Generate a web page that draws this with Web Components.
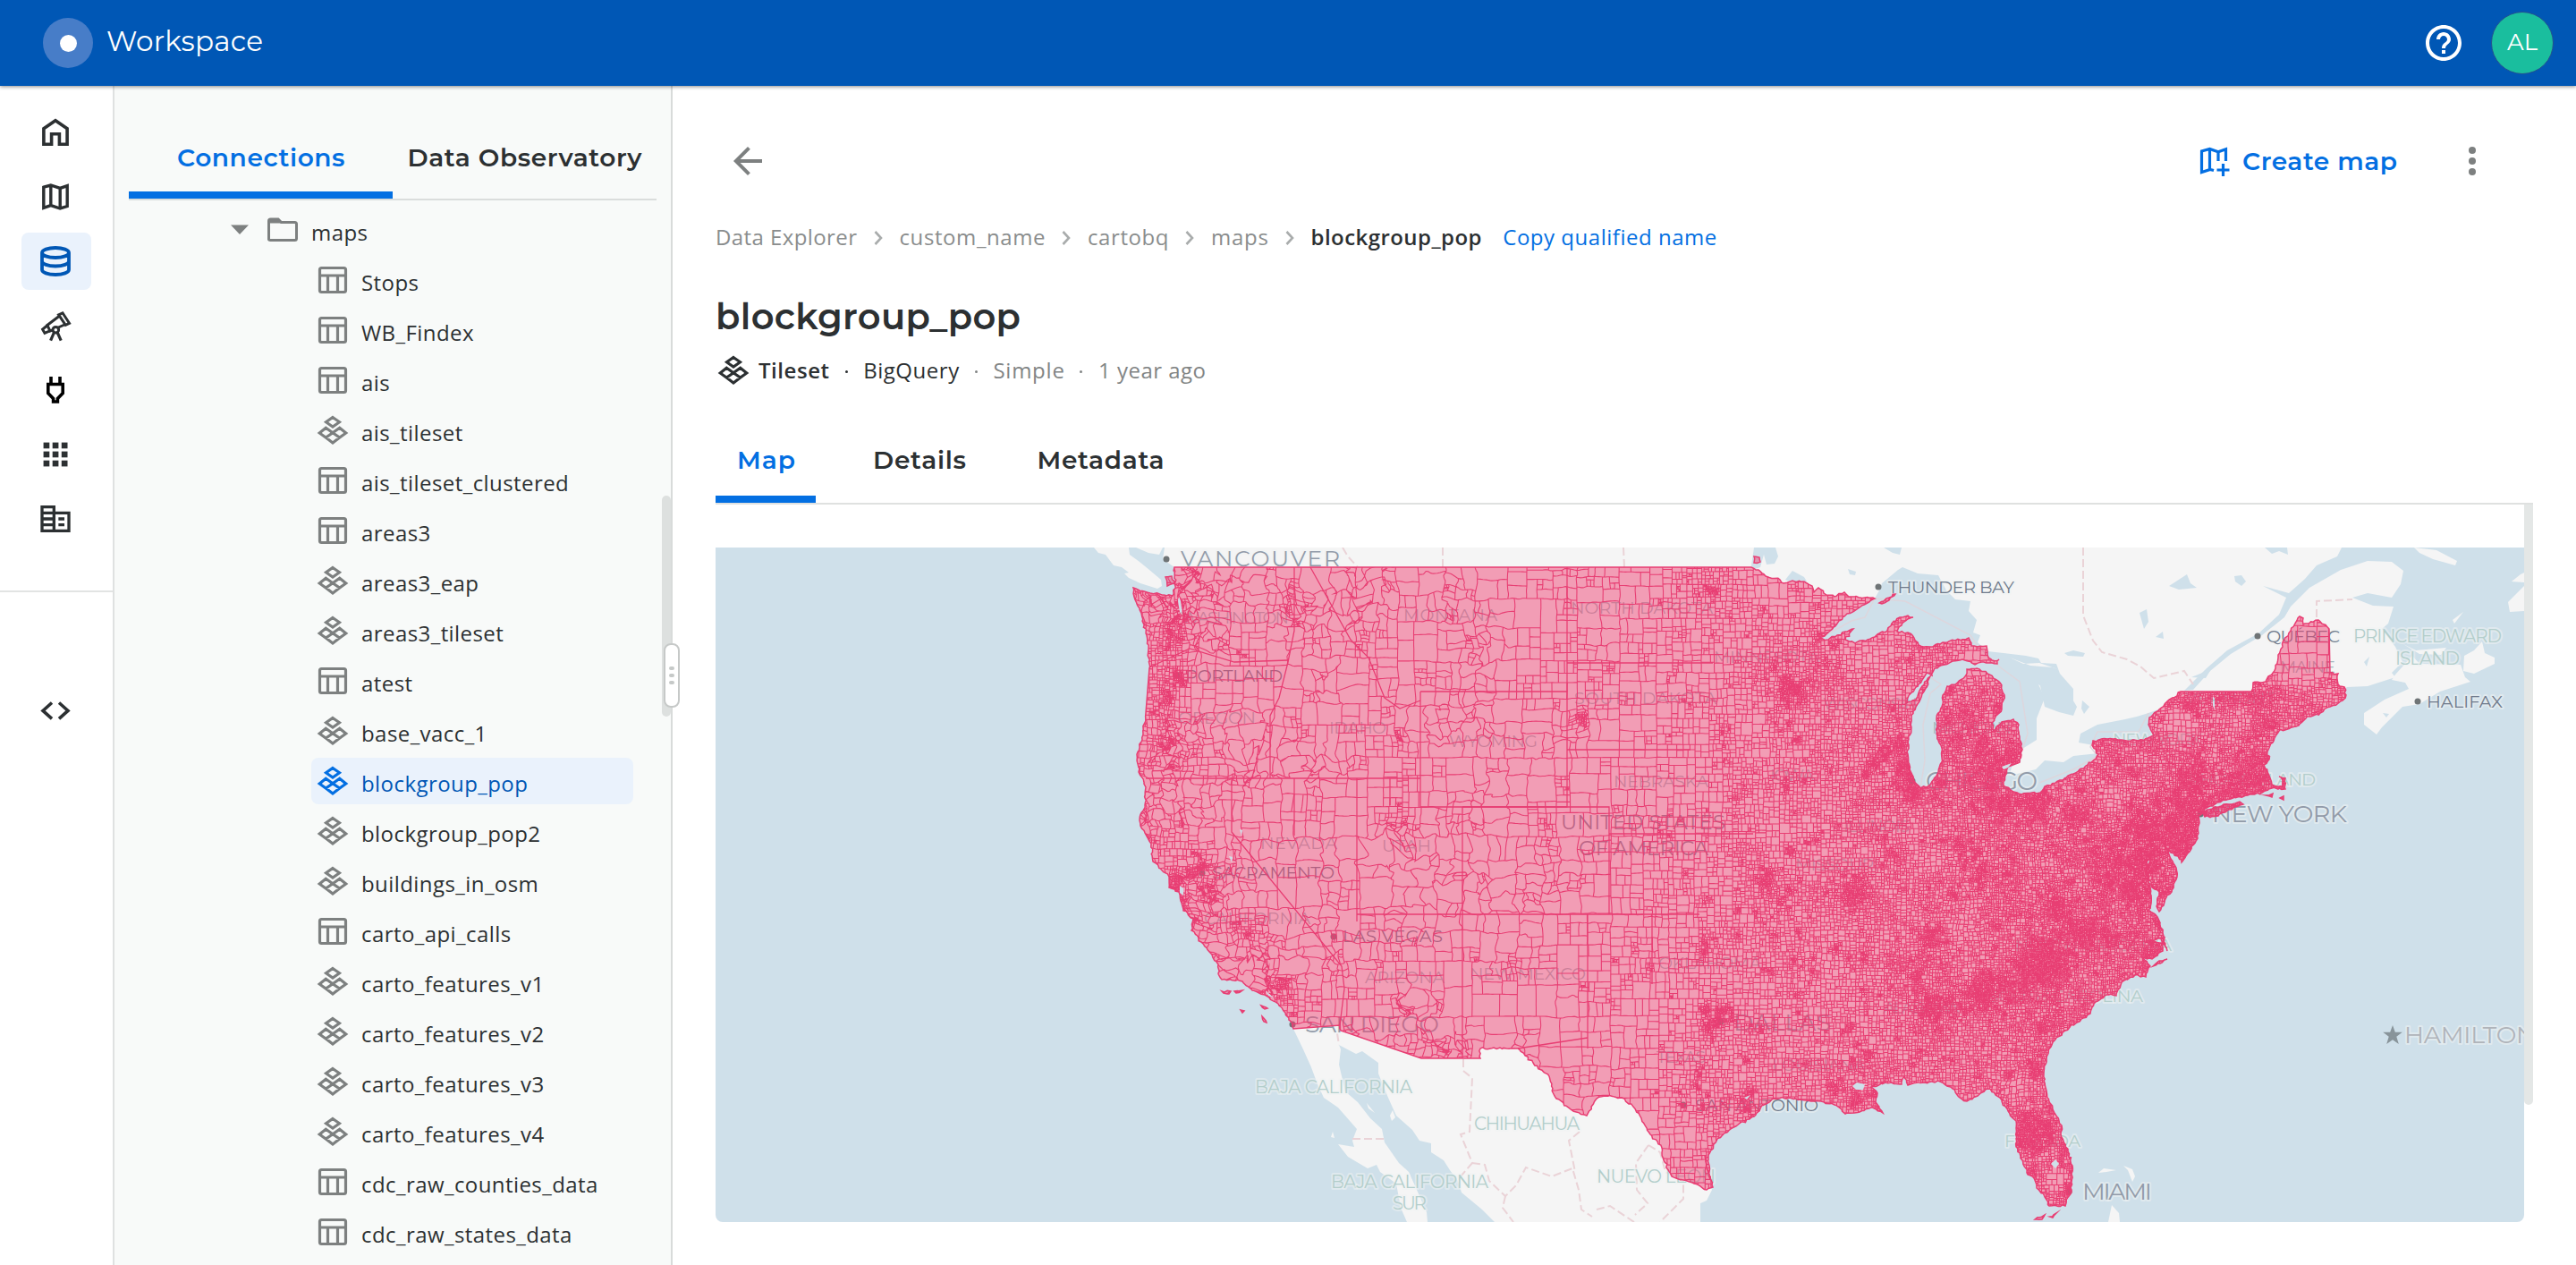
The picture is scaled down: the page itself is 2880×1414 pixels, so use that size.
<!DOCTYPE html>
<html lang="en">
<head>
<meta charset="utf-8">
<title>Workspace</title>
<style>
  html,body{margin:0;padding:0;background:#fff}
  body{width:2880px;height:1414px;overflow:hidden;font-family:"Open Sans","Liberation Sans",sans-serif;font-size:24px;color:#2c3032}
</style>
</head>
<body>
<workspace-app></workspace-app>
<script>
const define = (name, html, setup) => {
  const tpl = document.createElement('template');
  tpl.innerHTML = html;
  customElements.define(name, class extends HTMLElement {
    connectedCallback() {
      if (this.shadowRoot) return;
      this.attachShadow({mode: 'open'}).appendChild(tpl.content.cloneNode(true));
      if (setup) setup(this, this.shadowRoot);
    }
  });
};

/* ---------- icons: every drawing lives on a 48 x 48 grid ---------- */
const S = (d, w = 3.6) => `<path d="${d}" fill="none" stroke="currentColor" stroke-width="${w}"/>`;
const ICONS = {
  home: S('M10.9 37.2V19.8L24 10.8 37.1 19.8V37.2H28.4V25.8H19.6V37.2Z'),
  map: S('M10.8 13.2 18.8 11 29.2 14.4 37.2 11.6V34.6L29.2 37 18.8 33.6 10.8 36.4ZM18.8 11V33.6M29.2 14.4V37', 3.4),
  data: S('M9 14.5C9 11.5 15.5 9 24 9S39 11.5 39 14.5 32.5 20 24 20 9 17.5 9 14.5ZM9 14.5V33.5C9 36.5 15.5 39 24 39S39 36.500 39 33.5V14.5M9 24C9 27 15.5 29.5 24 29.5S39 27 39 24', 3.8),
  telescope: S('M27.600 11.800 32 9.800 39.500 21.300 35.300 23.300ZM28 13.500 14.800 23.500 18 30 34 23M14 24.500 9.600 28.200 12 32.300 17 30.200', 3) + '<circle cx="24.300" cy="28.700" r="3.300" fill="#fff" stroke="currentColor" stroke-width="3"/>' + S('M22.500 31.500 18.600 40.700M26.100 31.500 30.200 40.700', 3.2),
  plug: S('M19 9V17M29 9V17M15.800 17.500H32.200V27.500L26.400 33.500V37H21.600V33.500L15.800 27.500Z', 3.6),
  grid: [10.6, 20.6, 30.7].map(y => [10.6, 20.7, 30.8].map(x => `<rect x="${x}" y="${y}" width="6.700" height="6.700" fill="currentColor"/>`).join('')).join(''),
  building: '<g transform="translate(4 4) scale(1.667)"><path fill="currentColor" d="M12 7V3H2v18h20V7H12zM10 19H4v-2h6v2zm0-4H4v-2h6v2zm0-4H4V9h6v2zm0-4H4V5h6v2zm10 12h-8V9h8v10zm-2-8h-4v2h4v-2zm0 4h-4v2h4v-2z"/></g>',
  code: S('M20 15.500 10 24.400 20 33.300M28 15.500 38 24.400 28 33.300', 3.6),
  folder: S('M8.500 35.500V14Q8.500 12 10.500 12H19L22.500 15.500H37.500Q39.500 15.500 39.500 17.500V33.500Q39.500 35.500 37.500 35.500H10.500Q8.500 35.500 8.500 33.500', 3) + '<path d="M8 12h12l3.500 4.500H8z" fill="currentColor"/>',
  table: S('M11.500 10.500H36.500Q38.500 10.500 38.500 12.500V35.500Q38.500 37.500 36.500 37.500H11.500Q9.500 37.500 9.500 35.500V12.500Q9.500 10.500 11.500 10.500ZM9.500 19H38.500M18.500 19V37.500M29.500 19V37.500', 3.2),
  tileset: S('M24 9.500 31.500 14.800 24 20.100 16.500 14.800ZM16.300 21.200 24 26.800 16.300 32 9.200 27ZM31.700 21.200 38.800 27 31.700 32 24 26.800ZM24 26.800 31.700 32 24 38 16.300 32Z', 3.1),
  back: '<g transform="scale(2)"><path fill="currentColor" d="M20 11H7.830l5.590-5.590L12 4l-8 8 8 8 1.410-1.410L7.830 13H20v-2z"/></g>',
  help: '<g transform="scale(2)"><path fill="currentColor" d="M11 18h2v-2h-2v2zm1-16C6.480 2 2 6.480 2 12s4.480 10 10 10 10-4.480 10-10S17.520 2 12 2zm0 18c-4.410 0-8-3.590-8-8s3.590-8 8-8 8 3.590 8 8-3.590 8-8 8zm0-14c-2.210 0-4 1.790-4 4h2c0-1.100.9-2 2-2s2 .9 2 2c0 2-3 1.750-3 5h2c0-2.250 3-2.500 3-5 0-2.210-1.790-4-4-4z"/></g>',
  more: [12, 24, 36].map(y => `<circle cx="24" cy="${y}" r="4" fill="currentColor"/>`).join(''),
  mapadd: S('M23 34.500 19 33.500 9.500 36.500V13L18.500 10.500 28 13.800 36.500 10.800V24M18.500 10.500V34M28 14V24M33.500 27V41M26.500 34H40.500', 3.2),
  caret: '<path d="M14 18.500H34L24 29z" fill="currentColor"/>'
};
define('ui-icon', `<style>:host{display:block;width:48px;height:48px;flex:none}svg{display:block;width:100%;height:100%}</style><svg viewBox="0 0 48 48"></svg>`,
  (el, root) => { root.querySelector('svg').innerHTML = ICONS[el.getAttribute('name')]; });

/* one line of text whose tracking is set so that it fills the width given in "w" */
define('fit-text', `<style>:host{display:block;flex:none;white-space:nowrap;line-height:1.200}span{display:inline-block}</style><span><slot></slot></span>`,
  (el, root) => {
    const w = +el.getAttribute('w'), span = root.querySelector('span');
    el.style.width = w + 'px';
    const n = el.textContent.length;
    span.style.letterSpacing = ((w - span.getBoundingClientRect().width) / (n - 1)).toFixed(3) + 'px';
  });

define('app-header', `<style>
  :host{display:flex;align-items:center;height:96px;flex:none;background:#0057b5;color:#fff;padding:0 25px 0 48px;box-sizing:border-box;box-shadow:0 1px 4px rgba(0,0,0,.45);z-index:2;font-family:Montserrat,Inter,sans-serif}
  .logo{width:56px;height:56px;border-radius:50%;background:#477dc8;display:grid;place-items:center}
  .logo i{width:19px;height:19px;border-radius:50%;background:#fff}
  fit-text{margin:-2px 0 0 15px;font-size:31px}
  .sp{flex:1}
  .av{width:68px;height:68px;border-radius:50%;background:#1abe9e;border:1px solid #24508f;margin-left:29px;display:grid;place-items:center}
  .av fit-text{margin:0;font-size:26px}
</style><div class="logo"><i></i></div><fit-text w="175">Workspace</fit-text><div class="sp"></div><ui-icon name="help"></ui-icon><div class="av"><fit-text w="34">AL</fit-text></div>`);

define('rail-item', `<style>
  :host{display:grid;place-items:center;width:78px;height:64px;border-radius:8px;color:#2c3032}
  :host([active]){background:#eaf2fc;color:#0057b5}
  ui-icon{margin-left:-2px}
</style><ui-icon></ui-icon>`, (el, root) => {
  const i = document.createElement('ui-icon'); i.setAttribute('name', el.getAttribute('icon'));
  root.querySelector('ui-icon').replaceWith(i);
});
define('nav-rail', `<style>
  :host{display:flex;flex-direction:column;width:126px;border-right:2px solid #dfe1e1;background:#fff;flex:none}
  nav{display:flex;flex-direction:column;gap:8px;padding:20px 0 48px 24px}
  .sep{height:2px;background:#e2e4e3}
  .foot{padding:100px 0 0 24px}
</style><nav><rail-item icon="home"></rail-item><rail-item icon="map"></rail-item><rail-item icon="data" active></rail-item><rail-item icon="telescope"></rail-item><rail-item icon="plug" style="color:#000"></rail-item><rail-item icon="grid"></rail-item><rail-item icon="building"></rail-item></nav><div class="sep"></div><div class="foot"><rail-item icon="code"></rail-item></div>`);

define('ui-tab', `<style>
  :host{display:flex;align-items:center;box-sizing:border-box;height:100%;padding-top:1px;flex:none;color:#2c3032;font-family:Montserrat,Inter,sans-serif;font-weight:600;font-size:28px}
  :host([active]){color:#036fe2;box-shadow:inset 0 -8px #036fe2}
</style><slot></slot>`);

define('tree-row', `<style>
  :host{display:flex;align-items:center;height:56px;padding-left:220px;box-sizing:border-box;flex:none}
  .b{display:flex;align-items:center;height:52px;width:360px;border-radius:8px;color:#7d8080}
  span{margin:5px 0 0 8px;color:#2c3032;letter-spacing:.430px;white-space:nowrap}
  :host([active]) .b{background:#eaf2fc;color:#036fe2}
  :host([active]) span{color:#0057b5}
  :host([folder]){padding-left:120px}
</style><div class="b"></div>`, (el, root) => {
  root.querySelector('.b').innerHTML = (el.hasAttribute('folder') ? '<ui-icon name="caret" style="margin-left:-4px"></ui-icon>' : '') +
    `<ui-icon name="${el.getAttribute('icon')}"></ui-icon><span><slot></slot></span>`;
});

const ROWS = ['table Stops','table WB_Findex','table ais','tileset ais_tileset','table ais_tileset_clustered','table areas3','tileset areas3_eap','tileset areas3_tileset','table atest','tileset base_vacc_1','tileset blockgroup_pop','tileset blockgroup_pop2','tileset buildings_in_osm','table carto_api_calls','tileset carto_features_v1','tileset carto_features_v2','tileset carto_features_v3','tileset carto_features_v4','table cdc_raw_counties_data','table cdc_raw_states_data'];
define('tree-panel', `<style>
  :host{display:flex;flex-direction:column;position:relative;width:622px;border-right:2px solid #d8dbda;background:#f8faf9;flex:none;padding-top:34px;box-sizing:content-box;height:1284px}
  .tabs{display:flex;height:92px;margin:0 16px;border-bottom:2px solid #dadddc}
  .tree{padding-top:5px;display:flex;flex-direction:column}
  .thumb{position:absolute;right:0;top:458px;width:10px;height:247px;background:#dde0df;border-radius:5px}
  .grip{position:absolute;right:-10px;top:623px;width:14px;height:68px;background:#fff;border:2px solid #c6c9c8;border-radius:8px;display:flex;flex-direction:column;align-items:center;justify-content:center;gap:4px}
  .grip i{width:6px;height:4px;border-radius:2px;background:#c6c9c8}
</style><div class="tabs"><ui-tab active style="width:295px"><fit-text w="187.500" style="margin-left:54px">Connections</fit-text></ui-tab><ui-tab><fit-text w="262" style="margin-left:16.500px">Data Observatory</fit-text></ui-tab></div>
<div class="tree"><tree-row folder icon="folder">maps</tree-row></div><div class="thumb"></div><div class="grip"><i></i><i></i><i></i></div>`,
(el, root) => {
  const t = root.querySelector('.tree');
  for (const r of ROWS) {
    const [icon, name] = r.split(' ');
    const e = document.createElement('tree-row');
    e.setAttribute('icon', icon); e.textContent = name;
    if (name === 'blockgroup_pop') e.setAttribute('active', '');
    t.appendChild(e);
  }
});

define('crumb-sep', `<style>:host{display:block;width:10px;height:16px;flex:none}svg{display:block}</style><svg width="10" height="16" viewBox="0 0 10 16"><path d="M1.500 1 8 8 1.500 15" fill="none" stroke="#a9acac" stroke-width="2.600"/></svg>`);

/* ---------------------------- map ---------------------------- */
const US = '1313,634 1958,634 1966,637 1974,644 1990,648 1994,652 2004,649 2017,650 2026,655 2028,662 2033,657 2042,665 2051,667 2062,662 2067,667 2085,668 2096,669 2079,679 2065,686 2054,697 2044,707 2034,714 2044,715 2054,710 2063,706 2072,703 2063,715 2074,719 2088,715 2101,708 2110,705 2115,697 2124,690 2133,688 2139,690 2129,695 2121,706 2133,707 2140,713 2145,721 2158,723 2172,718 2186,716 2201,713 2204,722 2211,723 2221,722 2222,732 2227,738 2235,737 2233,742 2218,740 2208,743 2194,737 2183,739 2174,743 2163,747 2160,755 2154,752 2149,760 2142,768 2133,780 2130,787 2142,782 2147,770 2158,756 2151,773 2142,790 2137,803 2137,813 2133,830 2133,843 2135,860 2140,873 2147,881 2158,877 2167,863 2171,847 2170,833 2165,820 2165,803 2171,790 2172,777 2177,767 2186,765 2192,760 2199,753 2199,748 2210,747 2222,753 2236,763 2241,777 2238,793 2227,808 2229,817 2238,807 2251,804 2257,810 2258,827 2261,838 2258,852 2245,857 2242,867 2240,878 2251,885 2260,888 2272,886 2281,886 2286,879 2303,872 2318,865 2334,855 2346,843 2339,833 2340,828 2356,826 2372,827 2391,828 2408,822 2402,810 2403,802 2414,793 2425,782 2438,773 2517,773 2519,763 2533,762 2544,747 2547,732 2552,723 2554,715 2571,689 2575,691 2575,698 2592,693 2604,703 2605,752 2614,753 2614,765 2621,768 2623,777 2619,783 2605,790 2594,797 2586,800 2578,803 2567,812 2548,817 2541,830 2535,840 2537,849 2531,855 2537,867 2540,877 2552,879 2552,872 2548,868 2555,870 2555,882 2540,881 2529,886 2513,889 2494,893 2479,897 2467,903 2458,912 2459,920 2457,937 2448,952 2439,964 2435,957 2427,953 2422,948 2427,960 2433,970 2434,980 2428,997 2422,1003 2414,1019 2411,1013 2414,997 2406,992 2402,980 2402,967 2408,948 2400,963 2401,980 2404,992 2405,1010 2402,1017 2412,1025 2418,1043 2423,1063 2416,1049 2399,1052 2418,1054 2418,1063 2406,1072 2395,1070 2404,1080 2399,1092 2387,1090 2372,1098 2366,1113 2355,1112 2341,1122 2337,1133 2322,1143 2309,1152 2295,1165 2288,1183 2285,1200 2288,1220 2295,1240 2305,1258 2304,1268 2312,1287 2317,1303 2316,1330 2309,1348 2291,1348 2286,1338 2277,1328 2274,1317 2267,1313 2261,1297 2254,1282 2254,1253 2245,1242 2236,1227 2222,1217 2211,1225 2199,1231 2191,1227 2183,1217 2169,1209 2151,1210 2133,1213 2129,1203 2126,1212 2108,1210 2092,1215 2099,1222 2097,1232 2105,1244 2092,1238 2079,1243 2063,1245 2051,1235 2036,1231 2019,1230 2001,1227 1983,1228 1972,1235 1961,1248 1935,1262 1919,1275 1910,1293 1911,1310 1915,1327 1908,1330 1894,1323 1869,1315 1860,1297 1858,1283 1845,1268 1835,1250 1826,1237 1813,1227 1794,1225 1785,1228 1774,1247 1756,1240 1740,1228 1737,1223 1732,1203 1714,1188 1705,1180 1697,1172 1655,1172 1655,1183 1589,1183 1499,1152 1498,1146 1446,1150 1441,1140 1437,1132 1429,1122 1414,1112 1400,1107 1389,1097 1366,1095 1362,1088 1362,1078 1355,1067 1343,1053 1332,1040 1334,1027 1323,1018 1318,997 1307,992 1307,980 1289,963 1287,943 1275,923 1274,917 1280,900 1281,880 1273,863 1271,843 1277,827 1281,797 1285,747 1282,710 1274,680 1268,667 1267,657 1286,663 1311,666 1314,655';
const MINI = ['1961,622 1967,623 1968,628 1961,629','1303,645 1310,644 1313,652 1305,655','2101,674 2112,668 2119,664 2112,671 2104,675','2462,908 2475,902 2492,899 2504,896 2508,899 2492,905 2480,912 2465,913','2533,889 2541,887 2540,891','2549,892 2553,890 2553,894','1366,1108 1376,1108 1374,1111','1380,1108 1389,1107 1382,1110','1410,1124 1417,1127 1414,1128','1411,1136 1416,1143 1413,1142','1387,1129 1391,1130 1389,1132','2275,1363 2286,1358 2283,1363','2292,1360 2299,1356 2295,1361','2407,1080 2414,1074 2423,1072 2415,1077','1906,1292 1908,1305 1912,1318 1908,1304'];
const LAND = ['1302,612 1300,625 1313,634 1330,660 1900,660 2028,675 2096,669 2101,660 2104,652 2122,637 2127,634 2144,641 2167,643 2176,660 2186,670 2203,672 2201,683 2210,693 2206,707 2214,710 2211,718 2222,728 2240,730 2265,733 2279,736 2282,741 2299,742 2303,753 2318,770 2318,783 2303,793 2291,787 2286,770 2279,765 2286,780 2277,803 2277,827 2261,837 2259,852 2249,857 2247,867 2276,860 2286,850 2307,852 2318,845 2346,842 2346,834 2324,830 2326,820 2345,810 2376,804 2389,801 2402,797 2416,792 2440,785 2600,785 2624,768 2647,767 2678,757 2674,752 2686,740 2678,723 2663,703 2670,697 2676,678 2653,677 2630,668 2647,663 2674,668 2684,653 2687,638 2674,628 2647,627 2617,637 2582,657 2561,678 2554,690 2529,710 2494,731 2471,750 2452,771 2442,772 2467,747 2490,727 2525,708 2548,687 2556,668 2530,655 2559,663 2577,647 2590,632 2613,622 2618,612',
'1223,612 1228,618 1236,620 1245,632 1254,634 1262,640 1257,641 1262,646 1275,652 1294,658 1299,655 1298,648 1285,637 1274,628 1263,620 1262,612','1270,612 1300,612 1296,620 1284,618',
'2678,754 2697,733 2705,742 2751,743 2756,757 2762,762 2728,773 2705,787 2686,790 2663,813 2657,821 2643,810 2643,797 2666,782 2693,770 2689,763 2674,760','2687,720 2701,727 2735,724 2729,732 2705,731','2775,717 2778,730 2789,735 2789,742 2766,753 2754,750 2755,733 2766,727','2699,612 2724,615 2747,627 2745,632 2720,625 2705,618','2808,650 2818,642 2822,640 2822,651','2804,673 2822,655 2822,683 2806,684','2742,693 2754,684 2744,697','2247,735 2262,742 2280,741 2317,754 2311,752 2295,746 2270,744',
'1446,1150 1457,1173 1466,1193 1473,1212 1480,1227 1496,1238 1517,1262 1512,1275 1514,1282 1496,1279 1507,1293 1529,1306 1539,1302 1543,1310 1561,1323 1566,1350 1573,1366 1596,1366 1595,1355 1584,1330 1575,1310 1564,1300 1548,1277 1545,1262 1532,1250 1518,1232 1504,1220 1497,1190 1499,1173 1497,1168 1516,1178 1523,1175 1541,1188 1541,1200 1552,1227 1561,1247 1579,1263 1587,1275 1600,1278 1600,1288 1614,1297 1621,1308 1630,1320 1634,1333 1657,1352 1671,1366 1901,1366 1901,1345 1908,1342 1914,1330 1850,1150 1700,1100 1500,1100 1446,1120','1528,1233 1537,1244 1530,1239','1554,1247 1557,1241 1560,1249 1556,1253','1488,1271 1490,1265 1492,1272','1571,1306 1577,1314 1575,1318',
'2346,1311 2352,1306 2366,1308 2355,1310','2374,1303 2384,1307 2387,1315 2384,1321 2379,1308','2361,1347 2369,1356 2370,1366 2357,1366'];
const LAKES = ['1961,612 1985,612 1988,622 1984,630 1975,631 1972,620 1968,634 1960,637 1958,632','1996,648 2004,638 2017,645 2020,650 2000,650','2106,612 2126,612 2124,620 2116,618','2066,636 2075,639 2074,643 2068,642','2425,655 2445,642 2449,652 2456,657 2436,659','2498,644 2506,643 2511,650 2506,655 2499,650','2392,685 2400,681 2402,695 2397,703','2410,712 2418,706 2419,714','2532,612 2557,612 2558,620 2548,616 2540,619','2308,730 2318,727 2331,730 2329,734 2312,733','2280,762 2303,763 2313,775 2322,790 2318,800 2302,796 2286,790','2328,783 2336,790 2330,798 2327,792','2450,757 2472,748 2466,758','2643,740 2649,734 2646,745','2664,797 2671,798 2668,802'];
const HOLES = ['2071,1214 2076,1210 2085,1212 2083,1218 2075,1218','2293,1301 2298,1296 2302,1301 2298,1306','1318,667 1320,672 1322,688 1319,684 1317,672','2474,778 2476,781 2476,793 2474,789','1386,927 1389,928 1388,934','1319,990 1323,993 1323,1001 1319,998','1415,1107 1419,1111 1425,1116 1418,1113','1374,957 1378,958 1377,964','1950,1227 1957,1224 1953,1229','2238,857 2249,853 2245,858 2240,860'];
const BORDERS = ['1501,612 1507,622 1518,634','1613,612 1613,634','1815,612 1816,634','2329,612 2329,688 2340,716 2350,729 2378,737 2393,745 2408,758 2442,750 2452,765','2590,690 2590,672 2630,670','1495,1155 1497,1168','1512,1273 1548,1273','1636,1184 1636,1197 1646,1205 1643,1265 1633,1268 1646,1300 1633,1315','1646,1300 1660,1302 1665,1320 1683,1337 1695,1325 1706,1305 1735,1315 1758,1306 1765,1330 1768,1352 1780,1360','1683,1337 1680,1350 1692,1366','1766,1265 1754,1275 1761,1310','1785,1352 1800,1348 1827,1366','1843,1280 1829,1300 1830,1330 1842,1345 1828,1358','1843,1280 1856,1288 1862,1310 1882,1320 1882,1340 1856,1366'];
const SEALINES = ['2096,669 2130,672 2203,710 2211,722 2235,745 2258,762 2267,820 2261,838','2034,714 2070,694 2085,690 2096,669','2280,875 2318,860 2345,845 2337,835 2345,818 2391,818 2402,797','2147,881 2152,850 2150,810 2158,775 2170,765 2158,757'];
const STATELINES = ['1281,870 1588,870','1635,902 1635,1183','1517,1022 1900,1022','1517,870 1517,1030','1588,773 1752,773 1752,902 1588,902 1588,773','1635,902 1799,902 1799,1022','1752,634 1752,773','1752,741 1915,741','1752,838 1890,838','1799,932 1960,932','1377,870 1377,930 1500,1080 1503,1105 1498,1146','1588,783 1565,792 1548,780 1530,735 1510,715 1465,634','1447,634 1447,705 1440,740 1430,780 1420,800 1420,870','1285,746 1330,725 1380,740 1440,738','1775,1022 1775,1172','1847,1022 1847,1100','1775,1160 1697,1172','1447,870 1447,934','1554,870 1554,900'];
const CITY = [[1322,690,12],[1325,655,8],[1320,672,10],[1318,715,9],[1308,705,9],[1316,755,12],[1306,780,9],[1303,805,8],[1300,835,6],[1308,858,7],[1365,720,7],[1393,733,7],[1440,680,12],[1455,675,7],[1512,660,6],[1515,690,5],[1516,725,5],[1455,817,9],[1448,803,5],[1505,848,8],[1522,850,6],[1565,820,6],[1567,880,7],[1566,905,8],[1571,920,9],[1573,940,7],[1728,920,7],[1729,940,11],[1732,965,7],[1740,985,5],[1617,660,5],[1650,745,5],[1590,750,5],[1322,915,5],[1306,990,10],[1320,1000,12],[1325,1018,8],[1336,1030,6],[1330,975,10],[1350,970,10],[1343,960,10],[1382,950,6],[1360,985,9],[1355,1005,9],[1385,1030,10],[1395,1045,8],[1362,1075,6],[1404,1070,5],[1412,1105,11],[1430,1108,13],[1442,1115,13],[1447,1133,9],[1440,1095,7],[1460,1110,7],[1491,1046,5],[1555,1118,7],[1567,1125,10],[1575,1135,7],[1588,1158,7],[1505,1087,5],[1505,1148,4],[1609,1178,5],[1648,1072,6],[1695,1078,8],[1690,1090,6],[1702,1175,4],[1828,720,5],[2006,772,14],[1995,770,10],[1985,745,7],[2032,710,5],[1925,820,5],[1770,802,6],[2128,862,14],[2140,884,14],[2125,835,10],[2245,850,16],[2235,860,12],[2215,838,9],[2280,893,14],[2270,890,11],[2072,1000,11],[1975,985,10],[1942,893,7],[1920,1142,14],[1910,1148,10],[1928,1130,7],[1955,1223,11],[1952,1240,9],[1900,1205,7],[1880,1235,9],[1905,1065,9],[1943,1047,7],[1984,1045,6],[2085,1070,7],[2160,1045,9],[2215,1110,13],[2225,1100,10],[2160,1125,9],[2295,1075,13],[2265,1085,10],[2027,1088,6],[2050,1215,9],[2075,1232,11],[2097,1222,7],[2095,1240,6],[2265,1275,12],[2285,1265,10],[2270,1255,11],[2270,1310,6],[2312,1325,5],[2314,1305,5],[2308,1285,5],[2190,945,8],[2215,975,9],[2395,965,14],[2380,1000,9],[2430,935,18],[2455,905,16],[2525,858,16],[2500,880,16],[2540,810,6],[2320,910,12],[1997,880,6],[1998,993,6],[1908,1002,7],[2185,1000,6],[2330,1045,10],[2360,1050,9],[2300,1010,9],[2240,900,8],[2400,920,16],[2450,870,14],[2079,1167,6],[2010,1110,6],[1800,1120,5],[1804,1075,5],[1790,1168,4],[1760,803,5],[1845,1085,5],[1860,1170,5]];
const LOOSE = [[2440,812,20,8],[2570,725,36,24],[2365,892,14,6],[2300,1318,12,10],[2257,1215,14,5],[2210,735,28,5.500],[2100,725,28,6],[1995,660,32,13],[2060,672,16,7],[2320,985,16,4],[1980,1095,24,5],[2505,805,12,4.500],[2600,780,12,5]];
const LABELS = [
 ['VANCOUVER',1320,1498,633,25,'b'],['PORTLAND',1325,1434,762,19.5,'c'],['SACRAMENTO',1355,1492,981.7,19.5,'c'],['LAS VEGAS',1501,1613,1053,19.5,'c'],['SAN DIEGO',1459,1609,1154,27,'b'],['THUNDER BAY',2111,2252,662.7,19.5,'c'],['CHICAGO',2153,2278,883,28,'b'],['DALLAS',1938,2047,1152,27,'b'],['SAN ANTONIO',1895,2033,1241.7,19.5,'c'],['QUÉBEC',2534,2616,717.5,19.5,'c'],['HALIFAX',2713,2798,790.7,19.5,'c'],['NEW YORK',2473,2624,919,27,'b'],['MIAMI',2328,2406,1341,27,'b'],['HAMILTON',2688,2835,1165.7,27,'h'],
 ['UNITED STATES',1745,1929,926.7,23,'n'],['OF AMERICA',1765,1910,956,23,'n'],
 ['WASHINGTON',1320,1441,696.7,19,'s'],['MONTANA',1569,1674,694,19,'s'],['OREGON',1317,1404,809,19,'s'],['IDAHO',1486,1550,820,19,'s'],['WYOMING',1620,1719,835,19,'s'],['NEVADA',1409,1495,949,19,'s'],['UTAH',1545,1600,951.7,19,'s'],['CALIFORNIA',1346,1465,1033,19,'s'],['ARIZONA',1526,1615,1099,19,'s'],['NEW MEXICO',1643,1773,1095,19,'s'],['NORTH DAKOTA',1756,1915,686,19,'s'],['SOUTH DAKOTA',1760,1919,786.7,19,'s'],['MINNESOTA',1916,2034,741,19,'s'],['NEBRASKA',1804,1910,880,19,'s'],['IOWA',1979,2028,873,19,'s'],['WISCONSIN',2038,2144,792.7,19,'s'],['MICHIGAN',2160,2248,820,19,'s'],['ILLINOIS',2061,2135,930,19,'s'],['MISSOURI',2007,2100,973,19,'s'],['OKLAHOMA',1854,1969,1083,19,'s'],['TEXAS',1852,1907,1187.7,19,'s'],['LOUISIANA',1981,2085,1196.7,19,'s'],['ALABAMA',2105,2190,1133,19,'s'],['FLORIDA',2241,2326,1282,19,'g'],['MAINE',2549,2611,751.7,19,'s'],['VERMONT',2443,2543,786.7,19,'s'],['NEW YORK',2362,2462,833,19,'g'],['RHODE ISLAND',2446,2589,878,19.5,'g'],['NORTH CAROLINA',2252,2428,1063,19.5,'g'],['SOUTH CAROLINA',2222,2396,1120,19.5,'g'],
 ['BAJA CALIFORNIA',1403,1579,1221.7,20,'g'],['CHIHUAHUA',1648,1766,1262.7,20,'g'],['BAJA CALIFORNIA',1488,1664,1327.7,20,'g'],['SUR',1557,1595,1351.7,20,'g'],['NUEVO LEÓN',1785,1918,1322,20,'g'],['PRINCE EDWARD',2631,2797,718,20,'g'],['ISLAND',2678,2750,742.7,20,'g']];
const DOTS = [[1304,625],[1316,755],[1344,976],[1491,1047],[1445,1145],[2100,656],[2138,873],[1882,1235],[1924,1142],[2524,711],[2703,784],[2460,910],[2313,1332]];

define('data-map', `<style>
  :host{display:block;position:relative;width:2022px;height:754px;flex:none;overflow:hidden;background:#cfe0ea;border-radius:0 0 8px 8px}
  svg,canvas{position:absolute;left:0;top:0;width:2022px;height:754px}
  text{font-family:Montserrat,Inter,sans-serif;font-weight:400;paint-order:stroke;stroke:rgba(240,243,243,.5);stroke-width:4px;stroke-linejoin:round}
  .b{fill:#929ba9}.c{fill:#6f7a8b}.h{fill:#b0b4ba}.g{fill:#b3cecb}.s{fill:#a6b8bd;stroke:none}.n{fill:#858594;stroke:none}
</style><svg viewBox="800 612 2022 754"></svg><canvas width="2022" height="754"></canvas>`, (el, root) => {
  const poly = (a, f) => a.map(p => `<polygon points="${p}" fill="${f}"/>`).join('');
  root.querySelector('svg').innerHTML = poly(LAND, '#f5f5f5') + poly([US], '#f5f5f5') + poly(HOLES, '#cfe0ea') + poly(LAKES, '#cfe0ea') +
    BORDERS.map(p => `<polyline points="${p}" fill="none" stroke="#ead3d7" stroke-width="2" stroke-dasharray="9 4"/>`).join('') +
    SEALINES.map(p => `<polyline points="${p}" fill="none" stroke="#ddd6dd" stroke-width="1.500"/>`).join('') +
    LABELS.map(([t, a, b, y, s, c]) => `<text class="${c}" x="${a}" y="${y}" font-size="${s}" textLength="${b - a}" lengthAdjust="spacing">${t}</text>`).join('') +
    DOTS.map(([x, y]) => `<circle cx="${x}" cy="${y}" r="3.500" fill="#6f7476"/>`).join('') +
    '<path fill="#88949a" d="M2675 1146l2.800 7.800h8l-6.500 5 2.500 8.200-6.800-4.800-6.800 4.800 2.500-8.200-6.500-5h8z"/>';

  /* census mesh: cells are split until they reach the local target size */
  const ctx = root.querySelector('canvas').getContext('2d');
  ctx.translate(-800, -612);
  let seed = 7;
  const rnd = () => { seed = (Math.imul(seed, 1664525) + 1013904223) >>> 0; return seed / 4294967296; };
  const hash = (x, y) => { let h = (Math.imul(x, 374761393) + Math.imul(y, 668265263)) | 0; h = Math.imul(h ^ (h >>> 13), 1274126177); return ((h ^ (h >>> 16)) >>> 0) / 4294967296; };
  const noise = (x, y) => {
    const i = Math.floor(x), j = Math.floor(y); let u = x - i, v = y - j; u = u * u * (3 - 2 * u); v = v * v * (3 - 2 * v);
    return (hash(i, j) * (1 - u) + hash(i + 1, j) * u) * (1 - v) + (hash(i, j + 1) * (1 - u) + hash(i + 1, j + 1) * u) * v;
  };
  const curve = (pts, x) => {
    if (x <= pts[0][0]) return pts[0][1];
    for (let k = 1; k < pts.length; k++) if (x <= pts[k][0]) { const [a, p] = pts[k - 1], [b, q] = pts[k]; return p + (q - p) * (x - a) / (b - a); }
    return pts[pts.length - 1][1];
  };
  /* small towns scattered over the country, kept in a coarse grid for lookup */
  const towns = {};
  for (let k = 0; k < 1100; k++) {
    const x = 1270 + rnd() * 1200, y = 634 + rnd() * 640, r = 1.5 + rnd() * rnd() * 6;
    const key = Math.floor(x / 20) + ',' + Math.floor(y / 20);
    (towns[key] = towns[key] || []).push([x, y, r]);
  }
  const SIZE = [[1270,7],[1320,8.500],[1380,17],[1480,25],[1540,21],[1640,30],[1750,24],[1820,15],[1880,10],[1930,6],[1990,4.500],[2080,3.700],[2180,2.900],[2260,2.500],[2340,2.200],[2650,2.100]];
  const WARP = [[1270,10],[1450,11],[1600,9],[1740,4.500],[1800,2],[1900,1],[2100,1],[2200,1.800],[2650,2.200]];
  const target = (x, y) => {
    let s = curve(SIZE, x + (y > 1000 && x > 1850 ? 20 : 0));
    s *= .35 + noise(x / 40, y / 40) * .7 + noise(x / 14, y / 14) * .55 + noise(x / 5, y / 5 + 300) * .3;
    if (y > 790 && y < 1000 && x > 1390 && x < 1540) s *= 1.700;
    for (const [cx, cy, r, t] of LOOSE) { const d = ((x - cx) ** 2 + (y - cy) ** 2) / (r * r); if (d < 4) { const k = Math.exp(-d * d); s = s * (1 - k) + t * k; } }
    const rag = .45 + noise(x / 6, y / 6 + 500) * 1.300;
    for (const [cx, cy, r] of CITY) { const d = Math.hypot(x - cx, y - cy) / (r * 1.150) * rag; if (d < 4) s *= 1 - .94 * Math.exp(-Math.pow(d, 1.400)); }
    const gx = Math.floor(x / 20), gy = Math.floor(y / 20);
    for (let i = -1; i < 2; i++) for (let j = -1; j < 2; j++) for (const [cx, cy, r] of towns[(gx + i) + ',' + (gy + j)] || []) {
      const d = Math.hypot(x - cx, y - cy) / r; if (d < 3) s *= 1 - .88 * Math.exp(-d * d * rag);
    }
    return Math.max(s, 1.400);
  };
  const warp = (x, y) => {
    const a = curve(WARP, x) * Math.max(.06, noise(x / 45 + 9, y / 45) * 2 - .45);
    return [x + a * ((noise(x / 19, y / 19) - .5) * 1.500 + (noise(x / 6, y / 6 + 90) - .5) * .9), y + a * ((noise(x / 19 + 50, y / 19) - .5) * 1.500 + (noise(x / 6 + 70, y / 6) - .5) * .9)];
  };
  const toPath = s => new Path2D('M' + s.trim().split(' ').join('L') + 'Z');
  /* shorelines get a small ripple; long straight borders stay straight */
  const ripple = s => {
    const p = s.split(' ').map(q => q.split(',').map(Number)), out = [];
    p.forEach(([x, y], k) => {
      const [x2, y2] = p[(k + 1) % p.length], len = Math.hypot(x2 - x, y2 - y), n = len > 45 ? 1 : Math.max(1, Math.round(len / 3));
      for (let i = 0; i < n; i++) {
        const bx = x + (x2 - x) * i / n, by = y + (y2 - y) * i / n, a = i ? 2.400 : 0;
        out.push((bx + (hash(Math.round(bx * 7), Math.round(by * 7)) - .5) * a).toFixed(1) + ',' + (by + (hash(Math.round(by * 5), Math.round(bx * 5)) - .5) * a).toFixed(1));
      }
    });
    return out.join(' ');
  };
  const us = new Path2D(); [US, ...MINI].forEach(p => us.addPath(toPath(ripple(p))));
  ctx.fillStyle = 'rgba(239,70,118,.5)'; ctx.fill(us);
  ctx.strokeStyle = '#e83e73';
  ctx.save(); ctx.clip(us);
  /* the mesh is stroked in batches so that no single path grows too long */
  ctx.lineWidth = 1.100;
  let mesh = new Path2D(), count = 0;
  const edge = (x1, y1, x2, y2) => {
    const n = Math.max(1, Math.round(Math.hypot(x2 - x1, y2 - y1) / 2.500));
    for (let k = 0; k <= n; k++) {
      const [x, y] = warp(x1 + (x2 - x1) * k / n, y1 + (y2 - y1) * k / n);
      k ? mesh.lineTo(x, y) : mesh.moveTo(x, y);
    }
    if (++count % 2000 === 0) { ctx.stroke(mesh); mesh = new Path2D(); }
  };
  const split = (x, y, w, h, depth) => {
    let t = 1e9;
    const nx = Math.min(6, Math.ceil(w / 6)), ny = Math.min(6, Math.ceil(h / 6));
    for (let i = 0; i < nx; i++) for (let j = 0; j < ny; j++) t = Math.min(t, target(x + w * (i + .5) / nx, y + h * (j + .5) / ny));
    if (Math.max(w, h) < Math.min(38, t * (1 + rnd() * 1.200)) || depth > 24) return;
    const f = .28 + rnd() * .44;
    if (w * (.7 + rnd() * .6) > h) { const c = x + w * f; edge(c, y, c, y + h); split(x, y, c - x, h, depth + 1); split(c, y, x + w - c, h, depth + 1); }
    else { const c = y + h * f; edge(x, c, x + w, c); split(x, y, w, c - y, depth + 1); split(x, c, w, y + h - c, depth + 1); }
  };
  split(1255, 620, 1380, 740, 0);
  ctx.stroke(mesh);
  ctx.lineWidth = 1.300;
  for (const s of STATELINES) ctx.stroke(new Path2D('M' + s.split(' ').join('L')));
  ctx.restore();
  ctx.lineWidth = 1.500; ctx.stroke(us);
  ctx.globalCompositeOperation = 'destination-out';
  ctx.fillStyle = '#000';
  HOLES.forEach(p => ctx.fill(toPath(p)));
});

define('content-pane', `<style>
  :host{display:flex;flex-direction:column;flex:1;min-width:0;padding-left:48px;background:#fff}
  .bar{display:flex;align-items:center;height:48px;padding:60px 92px 0 12px;color:#7d8080}
  .create{display:flex;align-items:center;margin-left:auto;color:#036fe2;font:600 28px Montserrat,Inter,sans-serif;margin-right:60px}
  .create fit-text{margin:1px 0 0 7px}
  .crumbs{display:flex;align-items:center;gap:18.750px;height:37px;margin:43px 0 0 0;color:#8a8d8d}
  .crumbs b,.meta b{font-weight:600;color:#2c3032}
  .crumbs .copy{color:#036fe2;margin-left:5px}
  h1{margin:44px 0 0 0;height:51px;display:flex;align-items:center;font:600 40px Montserrat,Inter,sans-serif;color:#2c3032}
  .meta{display:flex;align-items:center;height:40px;margin-top:15px;color:#828585;margin-left:-4px}
  .meta ui-icon{color:#2c3032}
  .meta i{width:3px;height:3px;border-radius:50%;background:currentColor;margin:3px 17.600px 0}
  .d{color:#2c3032}
  .tabs{display:flex;height:96px;margin:32px 48px 0 0;border-bottom:2px solid #dfe1e0}
  .body{display:flex;align-items:flex-start}
  data-map{margin-top:48px}
  .thumb{width:10px;height:671px;background:#e4e7e6;border-radius:0 0 5px 5px}
</style>
<div class="bar"><ui-icon name="back"></ui-icon><div class="create"><ui-icon name="mapadd"></ui-icon><fit-text w="173">Create map</fit-text></div><ui-icon name="more"></ui-icon></div>
<div class="crumbs"><fit-text w="158">Data Explorer</fit-text><crumb-sep></crumb-sep><fit-text w="163">custom_name</fit-text><crumb-sep></crumb-sep><fit-text w="90.500">cartobq</fit-text><crumb-sep></crumb-sep><fit-text w="64">maps</fit-text><crumb-sep></crumb-sep><b><fit-text w="191">blockgroup_pop</fit-text></b><fit-text class="copy" w="239">Copy qualified name</fit-text></div>
<h1><fit-text w="341">blockgroup_pop</fit-text></h1>
<div class="meta"><ui-icon name="tileset"></ui-icon><b style="margin-left:4px"><fit-text w="79">Tileset</fit-text></b><i class="d"></i><span class="d"><fit-text w="107">BigQuery</fit-text></span><i></i><fit-text w="79.500">Simple</fit-text><i></i><fit-text w="120">1 year ago</fit-text></div>
<div class="tabs"><ui-tab active style="width:112px"><fit-text w="65" style="margin-left:24px">Map</fit-text></ui-tab><ui-tab><fit-text w="104" style="margin-left:64px">Details</fit-text></ui-tab><ui-tab><fit-text w="142" style="margin-left:79.500px">Metadata</fit-text></ui-tab></div>
<div class="body"><data-map></data-map><div class="thumb"></div></div>`);

define('workspace-app', `<style>
  :host{display:flex;flex-direction:column;width:2880px;height:1414px;overflow:hidden}
  .row{display:flex;flex:1;min-height:0}
</style><app-header></app-header><div class="row"><nav-rail></nav-rail><tree-panel></tree-panel><content-pane></content-pane></div>`);
</script>
</body>
</html>
